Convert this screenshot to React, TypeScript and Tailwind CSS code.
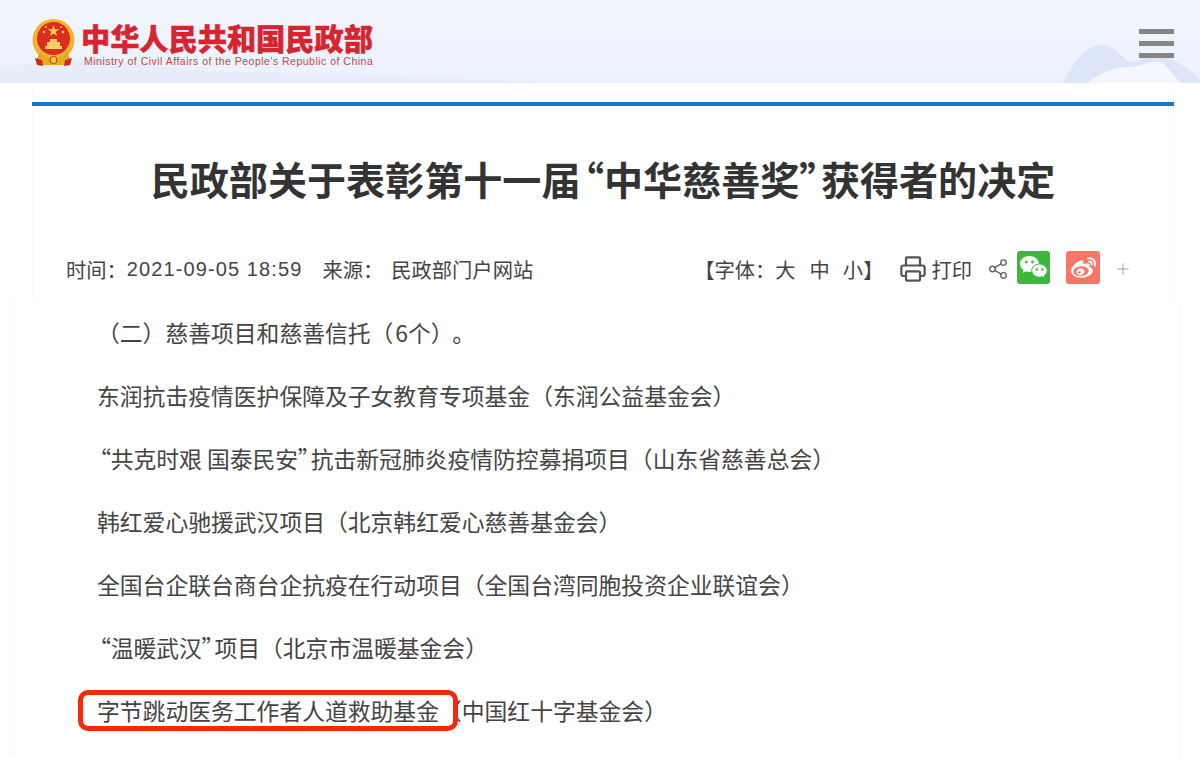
import type { ReactNode } from "react";
import { Plus, Printer, Share2 } from "lucide-react";
import { SiSinaweibo } from "react-icons/si";

// the CJK font draws curly quotes full width, the page has them narrower
function Open({ children }: { children: ReactNode }) {
  return <span className="[font-feature-settings:'palt'] ml-[0.1em]">{children}</span>;
}

function Close({ children }: { children: ReactNode }) {
  return <span className="[font-feature-settings:'palt'] mr-[0.05em]">{children}</span>;
}

const rows: ReactNode[] = [
  "东润抗击疫情医护保障及子女教育专项基金（东润公益基金会）",
  <>
    <Open>“</Open>共克时艰 国泰民安<Close>”</Close>抗击新冠肺炎疫情防控募捐项目（山东省慈善总会）
  </>,
  "韩红爱心驰援武汉项目（北京韩红爱心慈善基金会）",
  "全国台企联台商台企抗疫在行动项目（全国台湾同胞投资企业联谊会）",
  <>
    <Open>“</Open>温暖武汉<Close>”</Close>项目（北京市温暖基金会）
  </>,
];

function Emblem() {
  return (
    <svg width="44" height="48" viewBox="0 0 44 48" className="shrink-0">
      <circle cx="21.5" cy="21" r="21" fill="#f0b429" />
      <circle cx="21.5" cy="19.5" r="16.5" fill="#dd2c20" />
      <path d="M21.5 6l1.4 4.2h4.4l-3.6 2.6 1.4 4.2-3.6-2.6-3.6 2.6 1.4-4.2-3.6-2.6h4.4z" fill="#f8d24a" />
      <circle cx="12" cy="13" r="1.3" fill="#f8d24a" />
      <circle cx="31" cy="13" r="1.3" fill="#f8d24a" />
      <circle cx="14" cy="8" r="1" fill="#f8d24a" />
      <circle cx="29" cy="8" r="1" fill="#f8d24a" />
      <path d="M13 27h17v3H13zM15 23h13v4H15zM18 20h7v3h-7z" fill="#f6cf60" />
      <path d="M8 32c4 6 9 8 13.500 8s9.500-2 13.500-8l3 8-6 6H11l-6-6z" fill="#e8a820" />
      <path d="M3 39l7 2 1 6-6-1zM40 39l-7 2-1 6 6-1z" fill="#d0281e" />
      <circle cx="21.500" cy="41" r="3.500" fill="#f8d24a" stroke="#d0281e" />
    </svg>
  );
}

function WechatIcon() {
  return (
    <svg width="33" height="33" viewBox="0 0 33 33">
      <path d="M12.500 5C7.300 5 3 8.500 3 13c0 2.500 1.300 4.600 3.400 6.100L5.600 22l3.200-1.700c1.200.4 2.400.6 3.700.6 5.200 0 9.500-3.500 9.500-7.900S17.700 5 12.500 5z" fill="#fff" />
      <path d="M22.500 13c-4.300 0-7.800 2.900-7.800 6.600s3.500 6.600 7.800 6.600c1 0 1.900-.2 2.800-.5l2.700 1.600-.7-2.600c1.800-1.200 3-3 3-5.100 0-3.700-3.500-6.600-7.800-6.600z" fill="#fff" stroke="#3cb83c" strokeWidth="1" />
      <circle cx="9.300" cy="11" r="1.400" fill="#3cb83c" />
      <circle cx="15.500" cy="11" r="1.400" fill="#3cb83c" />
      <circle cx="19.800" cy="18.500" r="1.200" fill="#3cb83c" />
      <circle cx="25.300" cy="18.500" r="1.200" fill="#3cb83c" />
    </svg>
  );
}

export default function App() {
  return (
    <div className="w-[1200px] h-[758px] overflow-hidden bg-white text-[#333] font-['Noto_Sans_CJK_SC','Liberation_Sans',sans-serif]">
      <header className="relative h-[83px] overflow-hidden bg-gradient-to-b from-[#f0f5fe] to-[#ecf2fc] pl-[32px] pr-[26px] flex items-center justify-between">
        <svg className="absolute left-0 bottom-0" width="560" height="32" viewBox="0 0 560 32">
          <path d="M0 16c40-4 60-10 100-8s70 12 130 13 130 2 330 11H0z" fill="#e3eaf6" opacity="0.6" />
        </svg>
        <svg className="absolute right-0 bottom-0" width="137" height="40" viewBox="0 0 137 40">
          <path d="M0 40C8 24 20 6 32 3c10-3 18 1 26 9 4 6 10 9 18 5 8-5 16-7 24-5 12 6 24 12 37 24v4z" fill="#dce6f8" />
          <path d="M24 40c14-10 32-18 46-16 10-2 20-8 30-4 8 8 12 14 18 20z" fill="#f4f7fe" />
        </svg>
        <div className="relative flex items-start gap-[5px] pt-[2px]">
          <Emblem />
          <div className="flex flex-col">
            <div className="text-[29.2px] leading-[36px] font-black text-[#d9232e] [-webkit-text-stroke:0.4px_#d9232e] whitespace-nowrap">
              中华人民共和国民政部
            </div>
            <div className="ml-[3px] text-[10.5px] leading-[12px] text-[#c8434c] font-['Liberation_Sans',sans-serif] tracking-[0.49px] whitespace-nowrap">
              Ministry of Civil Affairs of the People's Republic of China
            </div>
          </div>
        </div>
        <div className="relative flex flex-col gap-[7px] w-[35px] mt-[3px]">
          <div className="h-[5px] bg-[#868686]" />
          <div className="h-[5px] bg-[#868686]" />
          <div className="h-[5px] bg-[#868686]" />
        </div>
      </header>

      <main className="ml-[32px] w-[1142px] h-[217px] pt-[19px] border-l border-r border-[#f8f8f8]">
        <div className="h-[4px] bg-[#1a75cf] -mx-px" />
        <h1 className="mt-[45px] text-center text-[39.1px] leading-[54px] font-bold text-[#333] whitespace-nowrap">
          民政部关于表彰第十一届<Open>“</Open>中华慈善奖<Close>”</Close>获得者的决定
        </h1>
        <div className="mt-[46px] pl-[33px] pr-[41px] flex items-center justify-between text-[20.3px] leading-[30px] text-[#444]">
          <div className="flex whitespace-nowrap">
            <span>时间：</span>
            <span className="font-['Liberation_Sans',sans-serif] text-[20px] tracking-[1.1px]">2021-09-05 18:59</span>
            <span className="ml-[20px]">来源：</span>
            <span className="ml-[8px]">民政部门户网站</span>
          </div>
          <div className="flex items-center whitespace-nowrap">
            <span>【字体：大</span>
            <span className="ml-[14px]">中</span>
            <span className="ml-[13px]">小】</span>
            <Printer size={28} strokeWidth={1.9} className="ml-[16px] text-[#555]" />
            <span className="ml-[4px]">打印</span>
            <Share2 size={22} strokeWidth={1.5} className="ml-[15px] text-[#666]" />
            <div className="ml-[8px] mb-[2px] w-[33px] h-[33px] rounded-[3px] bg-[#3cb83c]">
              <WechatIcon />
            </div>
            <div className="ml-[16px] mb-[2px] w-[34px] h-[33px] rounded-[3px] bg-[#f97566] flex items-center justify-center">
              <SiSinaweibo size={25} className="text-white" />
            </div>
            <Plus size={18} strokeWidth={1.2} className="ml-[14px] text-[#999]" />
          </div>
        </div>
      </main>

      <section className="ml-[13px] w-[1167px] h-[458px] pt-[1px] border-l border-r border-[#f8f8f8] text-[22.8px] leading-[63px] text-[#444]">
        <p className="pl-[83px]">
          （二）慈善项目和慈善信托（<span className="ml-[2px]">6</span>个）<span className="ml-[10px]">。</span>
        </p>
        {rows.map((row, i) => (
          <p key={i} className="pl-[83px] whitespace-nowrap">
            {row}
          </p>
        ))}
        <p className="pl-[83px] whitespace-nowrap">
          <span className="relative">
            字节跳动医务工作者人道救助基金
            <span className="absolute left-[-19px] right-[-19px] top-[-4px] bottom-[-4px] border-[5px] border-[#f5280c] rounded-[10px]" />
          </span>
          <span>（中国红十字基金会）</span>
        </p>
      </section>
    </div>
  );
}
